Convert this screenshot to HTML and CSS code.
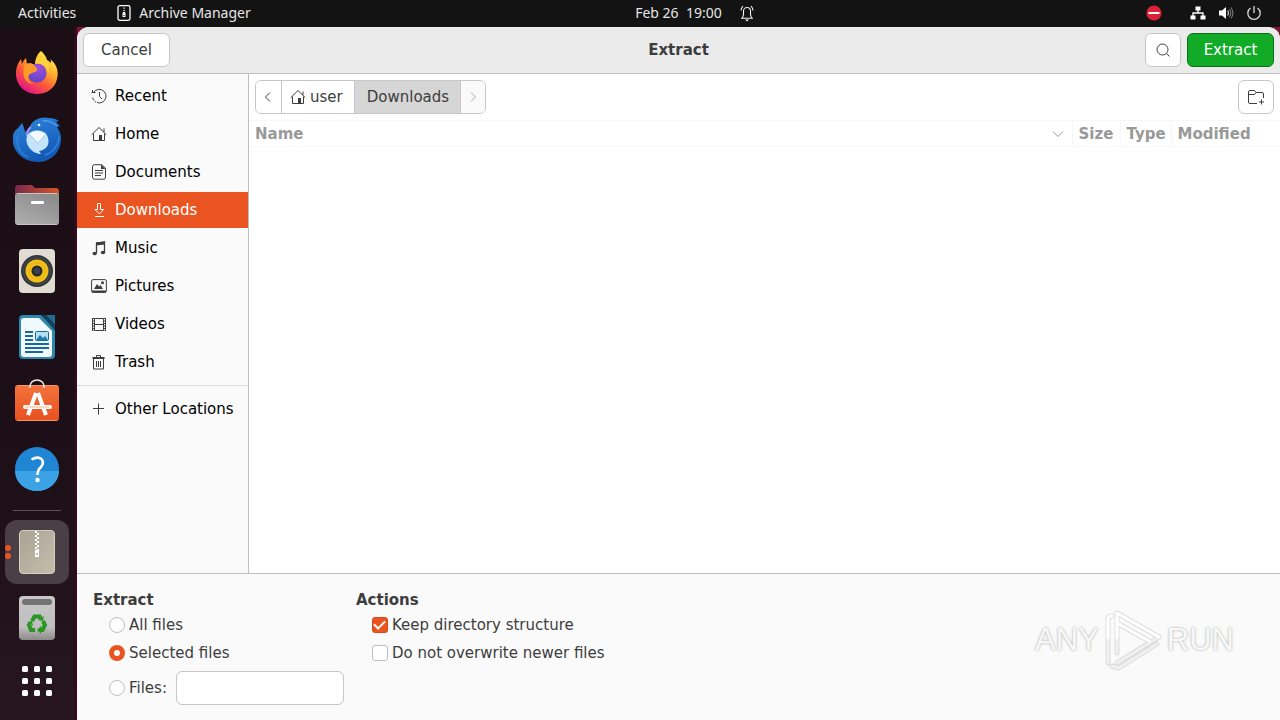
FILE: index.html
```html
<!DOCTYPE html>
<html lang="en">
<head>
    <meta charset="UTF-8">
    <meta name="viewport" content="width=device-width, initial-scale=1.0">
    <title>Extract</title>
    <link rel="stylesheet" href="styles.css">
</head>
<body>
<header class="topbar">
    <div class="topbar-left">
        <button class="top-btn">Activities</button>
        <button class="top-btn app-menu">
            <svg width="14" height="16" viewBox="0 0 14 16"><rect x="1" y=".7" width="12" height="14.6" rx="1.8" fill="none" stroke="#fff" stroke-width="1.3"/><path d="M6.5 2.5h1.3v1.3H6.5zM6.5 5h1.3v1.3H6.5z" fill="#fff"/><path d="M5.5 8l.7-1h1.6l.7 1v4h-3z" fill="#fff"/><path d="M6.5 10h1v1h-1z" fill="#131313"/></svg>
            <span>Archive Manager</span>
        </button>
    </div>
    <button class="top-btn clock">
        <span>Feb 26&nbsp; 19:00</span>
        <svg width="14" height="17" viewBox="0 0 14 17"><path d="M1 13.2h12M2.200 13q1.300-1.500 1.300-4V6a3.500 3.500 0 0 1 7 0v3q0 2.500 1.300 4M1 5.500Q1.200 3 3 1.200M13 5.500Q12.800 3 11 1.200" fill="none" stroke="#f2f2f2" stroke-width="1.1"/><path d="M5 14.500h4L7 16.500z" fill="#fff"/></svg>
    </button>
    <div class="topbar-right">
        <svg width="16" height="16" viewBox="0 0 16 16"><circle cx="8" cy="8" r="7.6" fill="#dc2038"/><path d="M2.5 7h11v2h-11z" fill="#fff"/></svg>
        <button class="top-btn tray" aria-label="System menu">
            <svg width="16" height="16" viewBox="0 0 16 16"><path d="M5.500 1.500h5v4h-5zM.5 10.500h5v4h-5zM10.500 10.500h5v4h-5z" fill="#fff"/><path d="M8 5v3M3 11V8h10v3" fill="none" stroke="#fff" stroke-width="1.3"/></svg>
            <svg width="16" height="16" viewBox="0 0 16 16"><path d="M1 5.500h3L8 2v12l-4-3.500H1z" fill="#fff"/><path d="M9.700 5.500q1.600 2.500 0 5" fill="none" stroke="#ddd" stroke-width="1.2"/><path d="M11.400 4q2.800 4 0 8M13 2.500q3.800 5.500 0 11" fill="none" stroke="#777" stroke-width="1.1"/></svg>
            <svg width="16" height="16" viewBox="0 0 16 16"><path d="M4.600 3A6.200 6.200 0 1 0 11.400 3M8 1v7" fill="none" stroke="#ddd" stroke-width="1.3"/></svg>
        </button>
    </div>
</header>

<div class="desktop">
    <nav class="dock" aria-label="Dock">
        <button class="dock-item" aria-label="Firefox">
            <svg width="48" height="48" viewBox="0 0 48 48">
                <defs>
                    <linearGradient id="fx" x1=".85" y1=".05" x2=".25" y2=".95"><stop offset="0" stop-color="#fff44f"/><stop offset=".35" stop-color="#ffb02e"/><stop offset=".65" stop-color="#ff5a36"/><stop offset="1" stop-color="#e31587"/></linearGradient>
                    <radialGradient id="fxglobe" cx=".6" cy=".25" r=".8"><stop offset="0" stop-color="#a34bdc"/><stop offset="1" stop-color="#5a45c8"/></radialGradient>
                </defs>
                <path d="M28 2c3 3 5 5 6 9 2 1 3 2 4 3 0-2 0-3-1-4 7 5 9 13 7 20-2 9-10 15-20 15C12 45 3 36 3 25c0-7 2-11 5-15l1 5c1-3 3-5 4-6l1 6c3-1 6 0 8 1 0-6 2-11 6-14z" fill="url(#fx)"/>
                <circle cx="24" cy="24" r="9.5" fill="url(#fxglobe)"/>
                <path d="M12 15c3-1 7-1 9 1 1 2 4 3 3 5-1 3-6 2-8 5-2 4 1 8 5 9-9 0-13-9-9-20z" fill="#ff9a27"/>
                <path d="M22 15c7-2 13 3 13 10 4-9-3-18-9-18-2 2-4 5-4 8z" fill="#ffd13b"/>
            </svg>
        </button>
        <button class="dock-item" aria-label="Thunderbird">
            <svg width="48" height="48" viewBox="0 0 48 48">
                <defs><linearGradient id="tb" x1="0" y1="0" x2=".4" y2="1"><stop offset="0" stop-color="#2f86dc"/><stop offset="1" stop-color="#1359b5"/></linearGradient></defs>
                <path d="M16 13c3-8 12-12 20-10 4 0 7 1 10 3l-3 1 4 4-3 1c4 5 5 12 3 19-3 10-12 16-22 16C11 47 2 38 0 28c-1-6 0-10 2-12 2-2 5-5 7-8 1 2 2 4 3 9z" fill="url(#tb)"/>
                <path d="M30 6q7-1 14 5" fill="none" stroke="#4a9ee8" stroke-width="1.5"/>
                <path d="M5 20c-3 8 1 18 10 22M46 21c0 10-7 17-14 19" fill="none" stroke="#2f83dc" stroke-width="1.5"/>
                <path d="M18 12q-4 3-4 9" fill="none" stroke="#a68bea" stroke-width="2"/>
                <path d="M14 21c3-7 19-8 21 2 2 7-2 12-9 13l2 3c-8 0-17-9-14-18z" fill="#c4e4fb"/>
                <path d="M16 19l9 9 8-9q-9-6-17 0z" fill="#f2faff"/><path d="M16 19l9 9 8-9" fill="none" stroke="#a8c9e3"/>
                <circle cx="26" cy="10" r="1.3" fill="#f2faff"/>
            </svg>
        </button>
        <button class="dock-item" aria-label="Files">
            <svg width="48" height="48" viewBox="0 0 48 48">
                <defs>
                    <linearGradient id="fb"><stop offset="0" stop-color="#77294b"/><stop offset="1" stop-color="#d95425"/></linearGradient>
                    <linearGradient id="ff" x1="0" y1="1" x2=".6" y2="0"><stop offset="0" stop-color="#b0b0b0"/><stop offset="1" stop-color="#8d8d8d"/></linearGradient>
                </defs>
                <path d="M5 4h14l3 3h21q3 0 3 4v10H2V8q0-4 3-4z" fill="url(#fb)"/>
                <rect x="2" y="12" width="44" height="32" rx="3" fill="url(#ff)"/>
                <path d="M4 12.500h40M4 43.500h40" stroke="#c5c5c5"/>
                <rect x="18" y="20" width="13" height="3" rx="1" fill="#fff"/>
            </svg>
        </button>
        <button class="dock-item" aria-label="Rhythmbox">
            <svg width="48" height="48" viewBox="0 0 48 48">
                <rect x="6" y="2" width="36" height="44" rx="4" fill="#e1dcd2"/>
                <circle cx="24" cy="24" r="16" fill="#34373c"/><circle cx="24" cy="24" r="13.5" fill="none" stroke="#494d55"/>
                <circle cx="24" cy="24" r="11.5" fill="#f2bf17"/><circle cx="24" cy="24" r="8" fill="none" stroke="#e8b413"/>
                <circle cx="24" cy="24" r="5.5" fill="#272a30"/><circle cx="24" cy="24" r="3" fill="#3c434f"/>
            </svg>
        </button>
        <button class="dock-item" aria-label="LibreOffice Writer">
            <svg width="48" height="48" viewBox="0 0 48 48">
                <path d="M10 2h18l14 14v26q0 4-4 4H10q-4 0-4-4V6q0-4 4-4z" fill="#2d86ac"/>
                <path d="M33 2h9v10z" fill="#226b94"/><path d="M29 2h4l9 10v6z" fill="#12435d"/>
                <path d="M11 5h15l13 13v23q0 3-3 3H11q-3 0-3-3V8q0-3 3-3z" fill="#f2f9fc"/>
                <path d="M12 19h8M12 23h8M12 27h8M12 31h24M12 35h24M12 39h18" stroke="#176b98" stroke-width="2"/>
                <rect x="22.5" y="18.5" width="13" height="9" rx="1" fill="#b6e0f4" stroke="#176b98"/>
                <path d="M23 27l4-5 3 3 2-2 3 4z" fill="#1b7caf"/>
            </svg>
        </button>
        <button class="dock-item" aria-label="Ubuntu Software">
            <svg width="48" height="48" viewBox="0 0 48 48">
                <defs><linearGradient id="sw" x1="0" y1="0" x2="0" y2="1"><stop offset="0" stop-color="#f4733d"/><stop offset="1" stop-color="#e7501e"/></linearGradient></defs>
                <rect x="2" y="6" width="44" height="36" rx="3" fill="url(#sw)"/>
                <path d="M4 6.500h40M4 41.500h40" stroke="#f59569"/>
                <path d="M17 9V7a7 6 0 0 1 14 0v2" fill="none" stroke="#f8eadf" stroke-width="1.6"/>
                <path d="M15 36l8-22M33 36l-8-22" fill="none" stroke="#fff" stroke-width="4"/>
                <path d="M12 28h25" stroke="#fff" stroke-width="4" stroke-linecap="round"/><path d="M12 28h24" stroke="#f3b493"/>
            </svg>
        </button>
        <button class="dock-item" aria-label="Help">
            <svg width="48" height="48" viewBox="0 0 48 48">
                <circle cx="24" cy="24" r="22" fill="#2086d4"/><path d="M2 26a22 20 0 0 0 44 0z" fill="#3ba2e5"/>
                <path d="M18.500 14.500q6-3.500 10-.5 3 4-.5 8-3.500 3-3.500 8" fill="none" stroke="#fff" stroke-width="2.6"/><circle cx="24.500" cy="35" r="2.200" fill="#fff"/>
            </svg>
        </button>
        <hr class="dock-sep">
        <button class="dock-item active" aria-label="Archive Manager">
            <svg width="48" height="48" viewBox="0 0 48 48">
                <defs><linearGradient id="ar" x1="0" y1="0" x2="1" y2="1"><stop offset="0" stop-color="#aaa394"/><stop offset="1" stop-color="#c5bdac"/></linearGradient></defs>
                <rect x="6.5" y="2.5" width="35" height="43" rx="3.5" fill="url(#ar)" stroke="#d7d0c2"/>
                <path d="M23 3v19" stroke="#fff" stroke-width="2" stroke-dasharray="2 2"/><path d="M25 5v17" stroke="#fff" stroke-width="2" stroke-dasharray="2 2"/>
                <path d="M22 22h4v7h-4z" fill="#fff"/><path d="M23.500 25h1v2h-1z" fill="#857e72"/>
            </svg>
        </button>
        <button class="dock-item" aria-label="Trash">
            <svg width="48" height="48" viewBox="0 0 48 48">
                <defs><linearGradient id="tr" x1="0" y1="0" x2="0" y2="1"><stop offset="0" stop-color="#c8c8c8"/><stop offset=".7" stop-color="#c0bebe"/><stop offset="1" stop-color="#8d8a8b"/></linearGradient></defs>
                <rect x="6" y="2" width="36" height="44" rx="4" fill="url(#tr)"/>
                <rect x="9" y="5" width="30" height="6" rx="3" fill="#737373"/>
                <g fill="none" stroke="#289722" stroke-width="4"><path d="M19 27l2.500-4.500h5l1 2"/><path d="M30 27l2 4-2.500 5H26"/><path d="M22 36h-4l-2-5 1-1"/></g>
                <path d="M25 26l5 1 1-5zM28 32v8l-4-4zM14 28l5-1 1 5z" fill="#289722"/>
            </svg>
        </button>
        <button class="dock-item apps" aria-label="Show Applications">
            <svg width="48" height="48" viewBox="0 0 48 48" fill="#fff">
                <rect x="9" y="9" width="6" height="6" rx="1.5"/><rect x="21" y="9" width="6" height="6" rx="1.5"/><rect x="33" y="9" width="6" height="6" rx="1.5"/>
                <rect x="9" y="21" width="6" height="6" rx="1.5"/><rect x="21" y="21" width="6" height="6" rx="1.5"/><rect x="33" y="21" width="6" height="6" rx="1.5"/>
                <rect x="9" y="33" width="6" height="6" rx="1.5"/><rect x="21" y="33" width="6" height="6" rx="1.5"/><rect x="33" y="33" width="6" height="6" rx="1.5"/>
            </svg>
        </button>
    </nav>

    <main class="window">
        <div class="headerbar">
            <button class="btn">Cancel</button>
            <h1>Extract</h1>
            <div class="header-actions">
                <button class="btn icon-btn" aria-label="Search">
                    <svg class="icon" width="16" height="16" viewBox="0 0 16 16"><circle cx="7.5" cy="7.5" r="5.5"/><path d="M11.500 11.500l3 3"/></svg>
                </button>
                <button class="btn suggested">Extract</button>
            </div>
        </div>

        <div class="content">
            <nav class="sidebar">
                <a href="#" class="place"><svg class="icon" width="16" height="16" viewBox="0 0 16 16"><path d="M2.500 4.500A6.800 6.800 0 1 1 1.500 9" stroke-dasharray="30 1 2 1 3 1"/><path d="M8.500 4v4.500L11 11M.5 4.500h4M1.500 2v3"/></svg>Recent</a>
                <a href="#" class="place"><svg class="icon" width="16" height="16" viewBox="0 0 16 16"><path d="M.7 8.700L8 1.500l7.300 7.200M2.500 7.500v7h11v-7M13 2.500V6"/><path class="solid" d="M8 9h3v5.500H8z"/></svg>Home</a>
                <a href="#" class="place"><svg class="icon" width="16" height="16" viewBox="0 0 16 16"><path d="M3.500.7H11l3.500 3.500v9q0 2-2 2h-9q-2 0-2-2v-10.500q0-2 2-2zM4 6.500h8M4 9h8M4 11.500h6"/><path class="solid" d="M10 .5l4.500 4.500H10z"/></svg>Documents</a>
                <a href="#" class="place selected"><svg class="icon" width="16" height="16" viewBox="0 0 16 16"><path d="M6.500 1.500h3v6h3L8.500 12 4 7.500h2.500zM4 14.500h9"/></svg>Downloads</a>
                <a href="#" class="place"><svg class="icon" width="16" height="16" viewBox="0 0 16 16"><path d="M5.500 13V3l8-1v10" stroke-width="1.3"/><path class="solid" d="M5 2.500l9-1v3l-9 1z"/><ellipse class="solid" cx="3.7" cy="13.500" rx="2.2" ry="1.8"/><ellipse class="solid" cx="12" cy="12.500" rx="2.2" ry="1.8"/></svg>Music</a>
                <a href="#" class="place"><svg class="icon" width="16" height="16" viewBox="0 0 16 16"><rect x=".6" y="1.6" width="14.8" height="12.8" rx="1.5"/><path class="solid" d="M1 12.500h14v2H1zM3 11l3-5 2 2.500L9.500 7l2.500 4z"/><circle class="solid" cx="11.5" cy="4.7" r="1.5"/></svg>Pictures</a>
                <a href="#" class="place"><svg class="icon" width="16" height="16" viewBox="0 0 16 16"><path d="M3.500 2.500h9v12h-9zM3.500 8.500h9M1.500 2v13M14.500 2v13"/><path d="M2.500 2v13M13.500 2v13" stroke-dasharray="1 1.5"/></svg>Videos</a>
                <a href="#" class="place"><svg class="icon" width="16" height="16" viewBox="0 0 16 16"><path d="M5.500 3.500v-2h4v2M2.500 5v10h10V5M5.500 7v6M7.500 7v6M9.500 7v6"/><path class="solid" d="M1.500 3h12v2h-12z"/></svg>Trash</a>
                <hr>
                <a href="#" class="place"><svg class="icon" width="16" height="16" viewBox="0 0 16 16"><path d="M7.500 2.500v11M2 7.500h11"/></svg>Other Locations</a>
            </nav>

            <section class="browser">
                <div class="pathrow">
                    <div class="pathbar">
                        <button class="arrow" aria-label="Back"><svg class="icon" width="16" height="16" viewBox="0 0 16 16"><path d="M10 3.500L5.500 8l4.500 4.500"/></svg></button>
                        <button><svg class="icon" width="16" height="16" viewBox="0 0 16 16"><path d="M.7 8.700L8 1.500l7.300 7.200M2.500 7.500v7h11v-7M13 2.500V6"/><path class="solid" d="M8 9h3v5.500H8z"/></svg>user</button>
                        <button class="current">Downloads</button>
                        <button class="arrow" aria-label="Forward" disabled><svg class="icon" width="16" height="16" viewBox="0 0 16 16"><path d="M6 3.500L10.500 8 6 12.500"/></svg></button>
                    </div>
                    <button class="btn icon-btn" aria-label="Create Folder">
                        <svg class="icon" width="18" height="16" viewBox="0 0 18 16"><path d="M10 14.500H3q-1.500 0-1.500-1.500V3q0-1.500 1.500-1.500h4.500l1.500 2h6q1.500 0 1.500 1.500v4M1.500 5.500h6l1.500-2M14.500 10.500v5M12 13h5"/></svg>
                    </button>
                </div>
                <table class="files">
                    <thead>
                        <tr>
                            <th class="col-name" scope="col"><span>Name<svg class="icon" width="12" height="12" viewBox="0 0 12 12"><path d="M1 3.500l5 5 5-5"/></svg></span></th>
                            <th class="col-size" scope="col">Size</th>
                            <th class="col-type" scope="col">Type</th>
                            <th class="col-mod" scope="col">Modified</th>
                        </tr>
                    </thead>
                </table>
            </section>
        </div>

        <form class="options">
            <fieldset>
                <legend>Extract</legend>
                <label><input type="radio" name="which">All files</label>
                <label><input type="radio" name="which" checked>Selected files</label>
                <div class="pattern">
                    <label><input type="radio" name="which">Files:</label>
                    <input type="text" aria-label="Files">
                </div>
            </fieldset>
            <fieldset>
                <legend>Actions</legend>
                <label><input type="checkbox" checked>Keep directory structure</label>
                <label><input type="checkbox">Do not overwrite newer files</label>
            </fieldset>
        </form>
    </main>
</div>

<div class="watermark">
    <span>ANY</span>
    <svg width="60" height="64" viewBox="0 0 60 64" fill="none" stroke-linejoin="round" stroke-linecap="round">
        <path d="M5 55V11q0-3 4-3M14 45V5l42 24-42 26M14 15l32 18M9 58l7 2 38-24" stroke="#dcdcdc" stroke-width="5"/>
        <path d="M5 55V11q0-3 4-3M14 45V5l42 24-42 26M14 15l32 18M9 58l7 2 38-24" stroke="#f0f0f0" stroke-width="3"/>
        <path d="M5 30V11q0-3 4-3M14 30V5l42 24M14 15l32 18" stroke="#fff" stroke-width="3"/>
    </svg>
    <span>RUN</span>
</div>
</body>
</html>
```
FILE: styles.css
```css
* {
    box-sizing: border-box;
}

body, html {
    margin: 0;
    height: 100%;
}

body {
    display: flex;
    flex-direction: column;
    background: linear-gradient(#7a1538, #4a1030);
    overflow: hidden;
    font-family: "DejaVu Sans", sans-serif;
    font-size: 15px;
    line-height: 18px;
    color: #3d3d3d;
}

button, input {
    font: inherit;
    color: inherit;
}

svg {
    display: block;
    flex: none;
}

.icon {
    fill: none;
    stroke: currentColor;
    stroke-width: 1;
}

.icon .solid {
    fill: currentColor;
    stroke: none;
}

/* top panel */
.topbar {
    display: grid;
    grid-template-columns: 17fr auto 14fr;
    align-items: center;
    height: 27px;
    flex: none;
    padding: 0 18px 1px;
    background: #131313;
    font-family: "Noto Sans", sans-serif;
    font-size: 14px;
}

.top-btn {
    display: flex;
    align-items: center;
    padding: 0;
    border: 0;
    background: none;
    color: #e6e6e6;
}

.topbar-left {
    display: flex;
    gap: 41px;
}

.app-menu {
    gap: 8px;
}

.clock {
    gap: 18px;
}

.topbar-right {
    display: flex;
    justify-content: flex-end;
    gap: 28px;
}

.tray {
    gap: 12px;
}

/* dock */
.desktop {
    flex: 1;
    display: flex;
    min-height: 0;
}

.dock {
    width: 77px;
    flex: none;
    display: flex;
    flex-direction: column;
    gap: 2px;
    padding: 14px 4px 0 5px;
    background: linear-gradient(#1b0e15, #1c0f17 60%, #27161f);
    border-right: 3px solid #2e0b20;
}

.dock-item {
    position: relative;
    display: flex;
    align-items: center;
    justify-content: center;
    width: 64px;
    height: 64px;
    flex: none;
    padding: 0;
    border: 0;
    border-radius: 12px;
    background: none;
}

.dock-item.apps {
    height: 58px;
}

.dock-item.active {
    background: #4a3e47;
}

/* two open windows */
.dock-item.active::before,
.dock-item.active::after {
    content: "";
    position: absolute;
    left: 0;
    top: 25px;
    width: 6px;
    height: 6px;
    border-radius: 50%;
    background: #e95420;
}

.dock-item.active::after {
    top: 33px;
}

.dock-sep {
    width: 48px;
    height: 1px;
    margin: 7px 8px;
    border: 0;
    flex: none;
    background: #5c5058;
}

/* window */
.window {
    flex: 1;
    min-width: 0;
    display: flex;
    flex-direction: column;
    border-radius: 12px 12px 0 0;
    background: #fafafa;
    overflow: hidden;
}

.headerbar {
    display: grid;
    grid-template-columns: 1fr auto 1fr;
    align-items: center;
    padding: 6px;
    background: #ebebeb;
    border-bottom: 1px solid #bfbfbf;
}

.headerbar h1 {
    margin: 0;
    font-size: 15px;
}

.header-actions {
    display: flex;
    justify-content: flex-end;
    gap: 6px;
}

.btn {
    display: flex;
    align-items: center;
    justify-content: center;
    justify-self: start;
    min-width: 87px;
    height: 34px;
    padding: 0 8px;
    border: 1px solid #c7c7c7;
    border-radius: 6px;
    background: #fff;
}

.icon-btn {
    min-width: 36px;
}

.suggested {
    background: #12ab28;
    border-color: #0b6e19;
    color: #fff;
}

.content {
    flex: 1;
    display: flex;
    min-height: 0;
}

.sidebar {
    width: 172px;
    flex: none;
    display: flex;
    flex-direction: column;
    gap: 2px;
    padding-top: 4px;
    border-right: 1px solid #bfbfbf;
    background: #fafafa;
}

.place {
    display: flex;
    align-items: center;
    gap: 8px;
    height: 36px;
    padding-left: 14px;
    color: #000;
    text-decoration: none;
    white-space: nowrap;
}

.place .icon {
    color: #3d3d3d;
}

.place.selected,
.place.selected .icon {
    background: #e95420;
    color: #fff;
}

.sidebar hr {
    width: 100%;
    height: 1px;
    margin: 3px 0;
    border: 0;
    background: #dcdcdc;
}

.browser {
    flex: 1;
    min-width: 0;
    background: #fff;
}

.pathrow {
    display: flex;
    justify-content: space-between;
    padding: 6px;
}

.pathbar {
    display: flex;
    height: 34px;
    border: 1px solid #c7c7c7;
    border-radius: 6px;
    overflow: hidden;
}

.pathbar button {
    display: flex;
    align-items: center;
    gap: 4px;
    padding: 0 11px 0 8px;
    border: 0;
    border-right: 1px solid #c7c7c7;
    background: #fff;
}

.pathbar .current {
    padding: 0 11px 0 12px;
    background: #d6d6d6;
}

.pathbar .arrow {
    padding: 0 5px 0 4px;
}

.pathbar .arrow:last-child {
    border-right: 0;
    padding: 0 4px;
    background: #fafafa;
    color: #a8a8a8;
}

.files {
    width: 100%;
    border-collapse: collapse;
    table-layout: fixed;
}

.files th {
    height: 26px;
    padding: 0 6px;
    border: solid #f7f7f7;
    border-width: 1px 1px 1px 0;
    color: #999;
    text-align: left;
}

.files th:last-child {
    border-right: 0;
}

.files th span {
    display: flex;
    align-items: center;
    justify-content: space-between;
    padding-right: 2px;
}

.col-size {
    width: 48px;
}

.col-type {
    width: 51px;
}

.col-mod {
    width: 109px;
}

/* extract options */
.options {
    display: flex;
    gap: 12px;
    padding: 16px 16px 15px;
    border-top: 1px solid #bfbfbf;
}

.options fieldset {
    display: flex;
    flex-direction: column;
    gap: 8px;
    margin: 0;
    padding: 0 0 0 16px;
    border: 0;
}

.options legend {
    margin-left: -16px;
    padding: 1px 0 6px;
    font-weight: bold;
}

.options label {
    display: flex;
    align-items: center;
    gap: 4px;
    height: 20px;
    white-space: nowrap;
}

.pattern {
    display: flex;
    align-items: center;
    gap: 9px;
}

.options input[type="radio"],
.options input[type="checkbox"] {
    appearance: none;
    width: 16px;
    height: 16px;
    margin: 0;
    border: 1px solid #bfbfbf;
    border-radius: 50%;
    background: #fff;
}

.options input[type="checkbox"] {
    display: grid;
    place-items: center;
    border-radius: 3px;
}

.options input[type="radio"]:checked {
    border: 5px solid #e95420;
}

.options input[type="checkbox"]:checked {
    border-color: #d64a19;
    background: #e95420;
}

.options input[type="checkbox"]:checked::before {
    content: "";
    width: 9px;
    height: 5px;
    margin-bottom: 3px;
    border: solid #fff;
    border-width: 0 0 2px 2px;
    transform: rotate(-45deg);
}

.options input[type="text"] {
    width: 168px;
    height: 34px;
    padding: 0 8px;
    border: 1px solid #c7c7c7;
    border-radius: 6px;
    background: #fff;
}

/* floats over the window */
.watermark {
    position: absolute;
    right: 46px;
    bottom: 48px;
    display: flex;
    align-items: center;
    gap: 4px;
    font-family: "Liberation Sans", sans-serif;
    font-size: 31px;
    line-height: 64px;
    color: #f8f8f8;
    text-shadow: 0 0 2px #bbb, 0 0 3px #ccc;
    pointer-events: none;
}
```
